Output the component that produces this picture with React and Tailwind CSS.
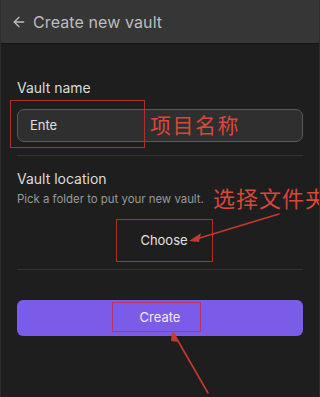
import { ArrowLeft } from "lucide-react";

const font = { fontFamily: "Inter, 'Noto Sans CJK SC', sans-serif" };

export default function App() {
  return (
    <div
      className="relative w-[320px] h-[397px] overflow-hidden bg-[#1e1e1e] border-x border-[#2c2c2c] text-[#dadada]"
      style={font}
    >
      {/* Header */}
      <div className="h-[44px] bg-[#363636] border-b border-[#151515] flex items-center pl-[10px] gap-[6px]">
        <ArrowLeft size={16} strokeWidth={2} className="text-[#bdbdbd]" />
        <span className="text-[16px] text-[#bdbdbd] tracking-[0.1px]">Create new vault</span>
      </div>

      <div className="px-[16px]">
        {/* Vault name */}
        <div className="pt-[35px] pb-[13px] border-b border-[#333333]">
          <div className="text-[14px] leading-[18px] text-[#dcdcdc]">Vault name</div>
          <div className="relative mt-[12px]">
            <div className="h-[33px] w-[286px] rounded-[7px] bg-[#2f2f2f] border border-[#5a5a5a] flex items-center pl-[12px] text-[13px] text-[#e0e0e0]">
              Ente
            </div>
            <div className="absolute left-[-7px] top-[-9px] w-[135px] h-[48px] border-[1.5px] border-[#b3302a]" />
            <span className="absolute left-[133px] top-[0px] text-[21px] leading-[33px] text-[#d9473b] tracking-[1.5px]">
              项目名称
            </span>
          </div>
        </div>

        {/* Vault location */}
        <div className="pt-[14px] pb-[7px] border-b border-[#333333] relative">
          <div className="text-[14px] leading-[18px] text-[#dcdcdc]">Vault location</div>
          <div className="mt-[4px] text-[11.4px] leading-[14px] text-[#9a9a9a]">Pick a folder to put your new vault.</div>
          <div className="flex justify-center mt-[13px] pl-[8px]">
            <div className="w-[97px] h-[43px] border-[1.5px] border-[#b3302a] flex items-center justify-center text-[13px] text-[#e2e2e2]">
              Choose
            </div>
          </div>
          <span className="absolute left-[196px] top-[28px] text-[22px] leading-[30px] text-[#d9473b] whitespace-nowrap tracking-[1px]">
            选择文件夹
          </span>
        </div>

        {/* Create */}
        <div className="pt-[30px]">
          <div className="relative h-[36px] w-[286px] rounded-[6px] bg-[#7b5ce9] flex items-center justify-center text-[13px] text-[#f0ecff]">
            Create
            <div className="absolute left-[95px] top-[2px] w-[89px] h-[30px] border-[1.5px] border-[#c2305e]" />
          </div>
        </div>
      </div>

      {/* annotation arrows */}
      <svg className="absolute inset-0 pointer-events-none" width="320" height="397">
        <g stroke="#c53a2e" strokeWidth="1.6" fill="none" strokeLinecap="round">
          <line x1="278" y1="214" x2="192" y2="240" />
          <line x1="207" y1="393" x2="173" y2="334" />
        </g>
        <polygon points="188,241 200,233 198,242" fill="#c53a2e" />
        <polygon points="171,331 178,342 170,341" fill="#c53a2e" />
      </svg>
    </div>
  );
}
